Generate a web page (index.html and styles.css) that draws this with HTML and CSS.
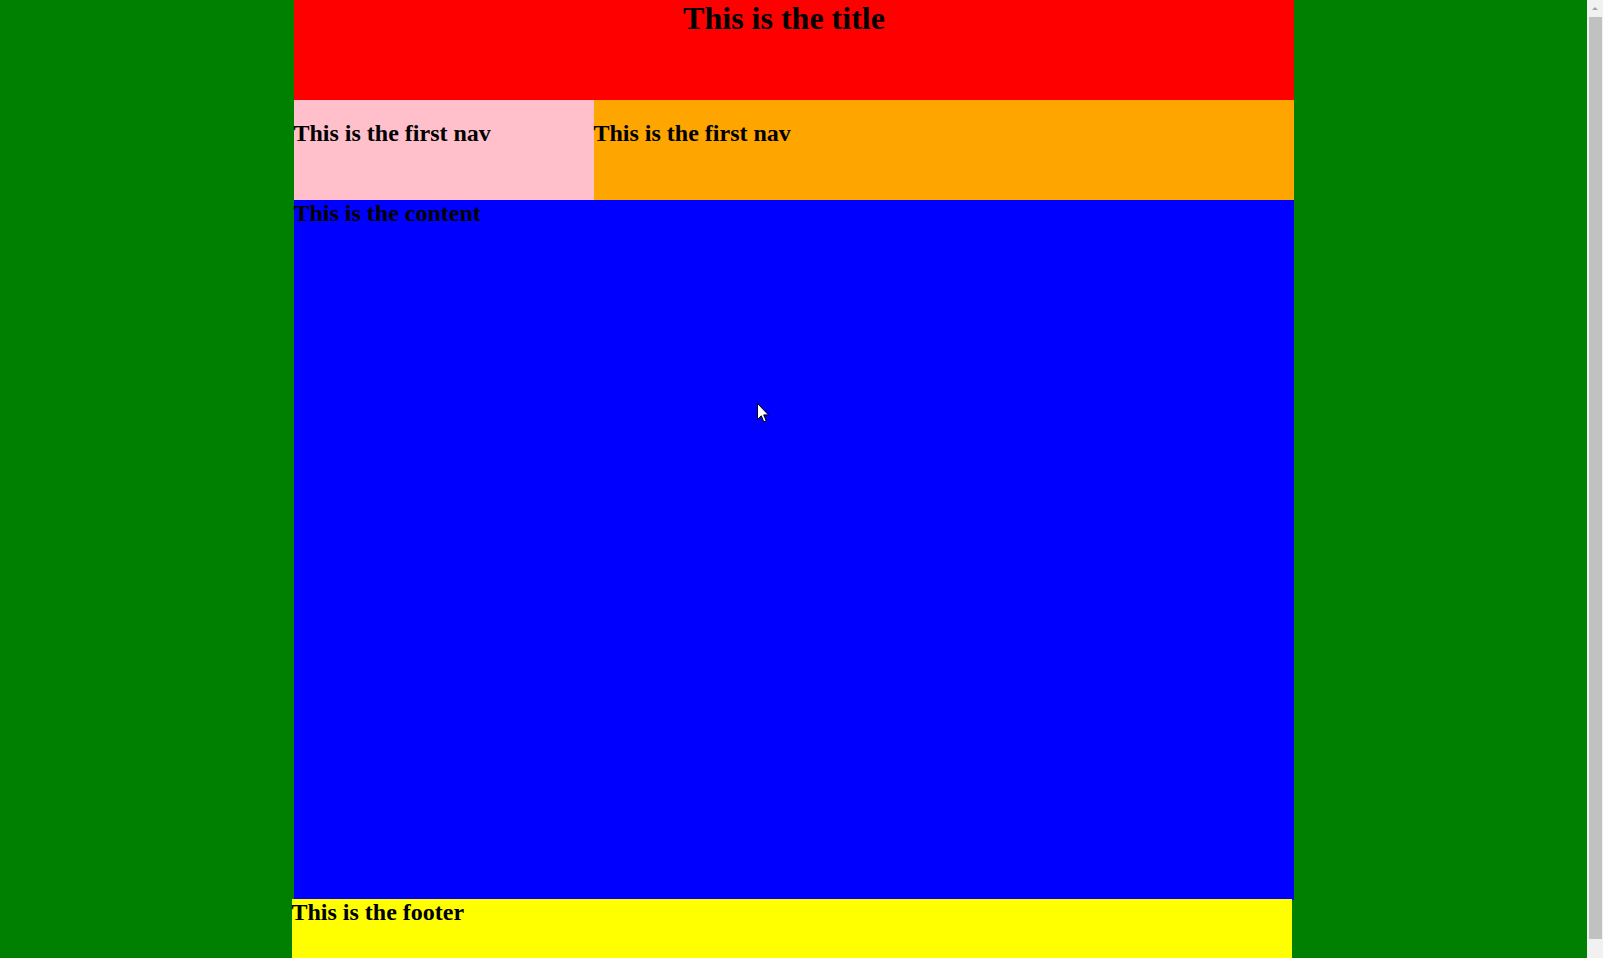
FILE: index.html
```html
<!DOCTYPE html>
<html>
<head>
<meta charset="utf-8">
<title>Layout</title>
<link rel="stylesheet" href="styles.css">
</head>
<body>
<div class="viewport">
  <div class="page">
    <header class="header"><h1 class="title">This is the title</h1></header>
    <div class="navs">
      <nav class="nav nav-first"><h2 class="nav-text">This is the first nav</h2></nav>
      <nav class="nav nav-second"><h2 class="nav-text">This is the first nav</h2></nav>
    </div>
    <main class="content"><h2 class="block-text">This is the content</h2></main>
    <footer class="footer"><h2 class="block-text">This is the footer</h2></footer>
  </div>
</div>
<div class="scrollbar">
  <div class="scroll-arrow"></div>
  <div class="scroll-thumb"></div>
</div>
<svg class="cursor" width="13" height="21" viewBox="0 0 13 21"><path d="M0.5 0.5 L0.5 16.5 L4.3 12.8 L6.8 18.8 L9.2 17.8 L6.7 11.9 L11.5 11.9 Z" fill="#fff" stroke="#000" stroke-width="1"/></svg>
</body>
</html>
```
FILE: styles.css
```css
html, body {
  margin: 0;
  padding: 0;
  overflow: hidden;
}
body {
  background: #008000;
  font-family: "Liberation Serif", "Times New Roman", serif;
  color: #000;
  height: 958px;
}
.viewport {
  width: 1587px;
}
.page {
  width: 1000px;
  margin: 0 auto;
}
.header {
  height: 100px;
  background: #ff0000;
  text-align: center;
  padding-right: 19px;
}
.title {
  margin: 0;
  font-size: 32px;
  font-weight: bold;
}
.navs {
  display: flex;
  height: 100px;
}
.nav {
  height: 100px;
}
.nav-first {
  width: 300px;
  background: #ffc0cb;
}
.nav-second {
  flex: 1;
  background: #ffa500;
}
.nav-text {
  margin: 19.92px 0 0;
  font-size: 24px;
  font-weight: bold;
}
.block-text {
  margin: 0;
  font-size: 24px;
  font-weight: bold;
}
.content {
  display: block;
  height: 700px;
  background: #0000ff;
}
.footer {
  width: 1000px;
  height: 62px;
  margin: -1px 0 0 -2px;
  background: #ffff00;
}
.scrollbar {
  position: fixed;
  top: 0;
  right: 0;
  width: 16px;
  height: 958px;
  background: #f1f1f1;
}
.scroll-arrow {
  position: absolute;
  left: 5px;
  top: 7px;
  width: 0;
  height: 0;
  border-left: 3px solid transparent;
  border-right: 3px solid transparent;
  border-bottom: 3px solid #a3a3a3;
}
.scroll-thumb {
  position: absolute;
  left: 2px;
  top: 17px;
  width: 13px;
  height: 922px;
  background: #c1c1c1;
}
.cursor {
  position: absolute;
  left: 757px;
  top: 403px;
}
```
